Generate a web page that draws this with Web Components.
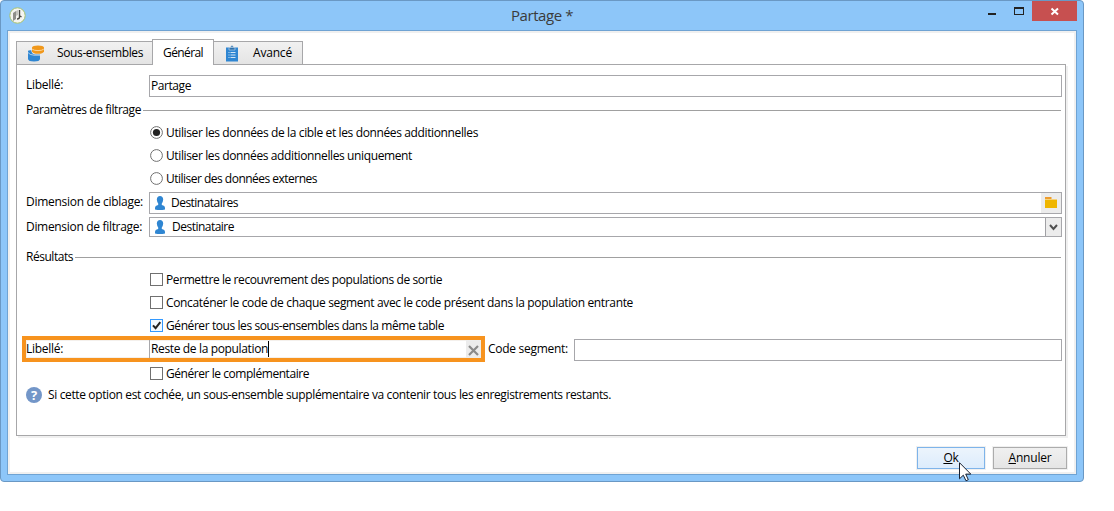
<!DOCTYPE html>
<html lang="fr">
<head>
<meta charset="utf-8">
<title>Partage</title>
<style>
html,body{margin:0;background:#fff}
body{font:12px/16px "Open Sans","Noto Sans",sans-serif;color:#000;overflow:hidden}
</style>
</head>
<body>
<app-window heading="Partage *">
  <tab-bar slot="tabs">
    <tab-item label="Sous-ensembles" w="86" style="width:137px"><ui-icon name="db"></ui-icon></tab-item>
    <tab-item label="Général" w="40" active style="width:62px"></tab-item>
    <tab-item label="Avancé" w="39" style="width:90px"><ui-icon name="clip"></ui-icon></tab-item>
  </tab-bar>
  <form-row style="height:22px;margin-top:10px" label="Libellé:" w="37"><text-field><fit-text w="40">Partage</fit-text></text-field></form-row>
  <group-title style="margin-top:5px" label="Paramètres de filtrage" w="115"></group-title>
  <option-item style="margin-top:3px" kind="radio" on label="Utiliser les données de la cible et les données additionnelles" w="312"></option-item>
  <option-item kind="radio" label="Utiliser les données additionnelles uniquement" w="246"></option-item>
  <option-item kind="radio" label="Utiliser des données externes" w="151"></option-item>
  <form-row style="height:22px;margin-top:2px" label="Dimension de ciblage:" w="117"><text-field><ui-icon name="user"></ui-icon><fit-text w="67">Destinataires</fit-text><ui-icon slot="end" name="folder"></ui-icon></text-field></form-row>
  <form-row style="height:20px;margin-top:3px" label="Dimension de filtrage:" w="116"><text-field><ui-icon name="user"></ui-icon><fit-text w="62" style="margin-left:1px">Destinataire</fit-text><ui-icon slot="end" name="drop"></ui-icon></text-field></form-row>
  <group-title style="margin-top:12px" label="Résultats" w="47"></group-title>
  <option-item style="margin-top:3px" label="Permettre le recouvrement des populations de sortie" w="276"></option-item>
  <option-item label="Concaténer le code de chaque segment avec le code présent dans la population entrante" w="467"></option-item>
  <option-item on label="Générer tous les sous-ensembles dans la même table" w="278"></option-item>
  <segment-row></segment-row>
  <option-item label="Générer le complémentaire" w="143"></option-item>
  <help-line style="margin-top:2px"></help-line>
  <push-button slot="actions" primary style="width:66px"><u>O</u>k</push-button>
  <push-button slot="actions" style="width:72px"><u>A</u>nnuler</push-button>
</app-window>
<mouse-cursor></mouse-cursor>
<script>
const define=(name,tpl,after)=>customElements.define(name,class extends HTMLElement{
  constructor(){super();this.attachShadow({mode:'open'});}
  connectedCallback(){
    this.shadowRoot.innerHTML=tpl(n=>this.getAttribute(n)||'');
    if(after)after(this);
  }
});

// Text that spreads its letters so that it fills a given width.
define('fit-text',()=>`<style>:host{display:inline-block;white-space:pre;flex:none}span{display:inline-block}</style><span><slot></slot></span>`,el=>{
  const s=el.shadowRoot.querySelector('span'),n=el.textContent.length,w=+el.getAttribute('w');
  if(w&&n)s.style.letterSpacing=((w-s.getBoundingClientRect().width)/n).toFixed(4)+'px';
});

const icons={
db:[17,17,`<path d="M0 5.800V14Q.3 16.500 6 16.500Q11.700 16.500 12 14V9.500H7Q3.500 9 3.300 5.300Q1 5 0 5.800Z" fill="#2f86d2"/><path d="M0 7.500Q1.500 10 6 10.200H12" fill="none" stroke="#cfe3f5" stroke-width=".8"/><path d="M4 2.500V6.200Q5 8.800 10 8.800T16 6.200V2.500Z" fill="#f0981c"/><ellipse cx="10" cy="2.600" rx="6" ry="2.200" fill="#f0981c"/><path d="M4.200 4.200Q6 5.600 10 5.600T15.800 4.200" fill="none" stroke="#fbe3bf" stroke-width=".8"/>`],
clip:[12,17,`<path d="M0 2.500H12V16.500H0Z" fill="#2f86d2"/><path d="M3 5V2.700H4.500Q4.500.6 6 .6T7.500 2.700H9V5Z" fill="#2a6fab" stroke="#e9eef4" stroke-width=".5"/><path d="M5.500 2h1v1h-1z" fill="#fff"/><path d="M2.500 7.500h1M4.500 7.500h5M2.500 10h1M4.500 10h5M2.500 12.500h1M4.500 12.500h5" stroke="#d3e6f6"/>`],
user:[10,14,`<path d="M1.800 3.600Q2 0 5 0T8.200 3.600Q8 6 6.800 7.500V9Q10 9.700 10 12V13.500Q5 14.500 0 13.500V12Q0 9.700 3.200 9V7.500Q2 6 1.800 3.600Z" fill="#2f86d2"/>`],
folder:[20,20,`<path d="M0 0H20V20H0Z" fill="#ececec"/><path d="M4 4H10.500V6H4Z" fill="#ee9c2c"/><path d="M4 6H16V7H4Z" fill="#f6d27a"/><path d="M4 7H16V15H4Z" fill="#efb600"/>`],
drop:[16,18,`<path d="M0 0H16V18H0Z" fill="#ececec"/><path d="M.5 0V18" stroke="#a0a0a4"/><path d="M5 7L8.500 11L12 7" fill="none" stroke="#505050" stroke-width="2"/>`]};
define('ui-icon',a=>{const [w,h,p]=icons[a('name')];return `<style>:host{display:block;flex:none;width:${w}px;height:${h}px}svg{display:block}</style><svg width="${w}" height="${h}" viewBox="0 0 ${w} ${h}">${p}</svg>`});

define('app-window',a=>`<style>
:host{display:flex;flex-direction:column;box-sizing:border-box;width:1084px;height:482px;border:1px solid #6a98c4;border-radius:4px;background:#8dc6f9;padding:0 6px 6px}
header{height:29px;display:flex;flex:none}
.logo{margin:6px 0 0 2px;width:17px;height:17px}
.title{flex:1;padding-left:485px;font:15px/29px "Open Sans","Noto Sans",sans-serif;color:#3b3b3b}
.min{width:8px;height:2px;background:#222;margin:12px 18px 0 0}
.max{box-sizing:border-box;width:10px;height:8px;border:1px solid #222;border-top-width:2px;margin:6px 8px 0 0}
.close{width:45px;height:20px;background:#c75050}
main{flex:1;box-sizing:border-box;border:1px solid #6fa3d3;background:#fff;box-shadow:inset 0 0 0 2px #f0f0f0;padding:8px 9px 5px 8px;display:flex;flex-direction:column}
.panel{box-sizing:border-box;width:1050px;height:372px;border:1px solid #a7a7a9;box-shadow:2px 2px 0 #f0f0f0;padding:0 3px 0 9px;display:flex;flex-direction:column}
footer{display:flex;justify-content:flex-end;gap:8px;margin:11px 0 0}
svg{display:block}
</style><header><svg class="logo" viewBox="0 0 17 17"><circle cx="8.500" cy="8.500" r="7.700" fill="#f5f5f1" stroke="#a8c26c"/><path d="M4 6L7 4V12L4 14Z" fill="#8e8e8a"/><path d="M7 4L9 3V8L7 9Z" fill="#c5c5c0"/><path d="M10.500 3V10Q10.500 12 8 12M11 9L12.500 10" fill="none" stroke="#4a4a44" stroke-width="1.400"/></svg><div class="title"><fit-text w="62">${a('heading')}</fit-text></div><i class="min"></i><i class="max"></i><svg class="close" viewBox="0 0 45 20"><path d="M19.500 7.500L26 13.500M26 7.500L19.500 13.500" stroke="#fff" stroke-width="2"/></svg></header>
<main><slot name="tabs"></slot><div class="panel"><slot></slot></div><footer><slot name="actions"></slot></footer></main>`);

define('tab-bar',()=>`<style>:host{display:flex;align-items:flex-end;height:26px;margin-bottom:-1px;position:relative;flex:none}</style><slot></slot>`);
define('tab-item',a=>{const on=a('w')==='40';return `<style>:host{box-sizing:border-box;display:flex;align-items:center;justify-content:flex-end;height:24px;border:1px solid #a7a7a9;${on?'border-bottom:0;height:26px;background:#fff;margin:0 -1px 0 -1px;position:relative;z-index:1;padding:0 10px 0 0':'background:linear-gradient(#f1f1f1,#e4e4e4);padding:0 10px 0 0'}}
:host(:first-child){padding-right:9px}fit-text{padding-bottom:${on?0:1}px}::slotted(ui-icon){margin-right:auto!important;margin-left:11px}::slotted(ui-icon[name=clip]){margin-left:12px}</style><slot></slot><fit-text w="${a('w')}">${a('label')}</fit-text>`});

define('form-row',a=>`<style>:host{display:flex;flex:none}.l{width:123px;flex:none;padding-top:2px}::slotted(*){flex:1}</style><div class="l"><fit-text w="${a('w')}">${a('label')}</fit-text></div><slot></slot>`);
define('text-field',()=>`<style>:host{box-sizing:border-box;display:flex;align-items:center;border:1px solid #a7a7ab;background:#fff;padding-left:1px}
.end{margin-left:auto;display:flex}::slotted(ui-icon[name=user]){margin:0 6px 0 4px}.t{display:flex;align-items:center;padding-bottom:1px}</style><div class="t"><slot></slot></div><div class="end"><slot name="end"></slot></div>`);
define('group-title',a=>`<style>:host{display:flex;flex:none;align-items:center;height:16px}i{flex:1;height:1px;background:#a0a0a0;margin:1px 1px 0 2px}</style><fit-text w="${a('w')}">${a('label')}</fit-text><i></i>`);
define('option-item',a=>`<style>:host{display:flex;flex:none;align-items:center;height:23px;padding-left:124px}svg{margin-right:3px;flex:none}</style>`,el=>{
  const on=el.hasAttribute('on'),r=el.getAttribute('kind')==='radio';
  el.shadowRoot.innerHTML+=`<svg width="13" height="13">${r?`<circle cx="6.500" cy="6.500" r="5.900" fill="#fff" stroke="#707070"/>${on?'<circle cx="6.500" cy="6.500" r="3.600" fill="#222"/>':''}`:`<rect x=".5" y=".5" width="12" height="12" fill="${on?'#f3f9ff':'#fff'}" stroke="${on?'#3399ff':'#707070'}"/>${on?'<path d="M3 6.300L5.600 9.200L10.300 3.200" fill="none" stroke="#222" stroke-width="2"/>':''}`}</svg><fit-text w="${el.getAttribute('w')}">${el.getAttribute('label')}</fit-text>`;
});
define('segment-row',()=>`<style>:host{display:flex;flex:none;height:26px;margin:-1px 0 0 -4px}
.hl{box-sizing:border-box;width:463px;border:4px solid #f7931e;display:flex;box-shadow:inset 0 0 0 1px #f4f0ec}
.l{width:123px;line-height:18px}.in{flex:1;border-left:1px solid #a7a7ab;padding-left:1px;display:flex;line-height:18px}
.caret{width:1px;height:16px;margin-top:1px;background:#000}.x{margin-left:auto;background:#ececec;width:15px;height:18px}
.code{padding:5px 6px 0 3px}text-field{flex:1;height:22px;margin-top:3px}</style>
<div class="hl"><div class="l"><fit-text w="37">Libellé:</fit-text></div><div class="in"><fit-text w="117">Reste de la population</fit-text><i class="caret"></i><svg class="x" viewBox="0 0 15 18"><path d="M3 6L12 15M12 6L3 15" stroke="#8a8a8a" stroke-width="2.200"/></svg></div></div><div class="code"><fit-text w="80">Code segment:</fit-text></div><text-field></text-field>`);
define('help-line',()=>`<style>:host{display:flex;align-items:center;flex:none;height:16px;gap:6px}i{width:16px;height:16px;border-radius:50%;background:#7396c8;color:#fff;font:bold 13px/16px "Open Sans",sans-serif;text-align:center}</style><i>?</i><fit-text w="563">Si cette option est cochée, un sous-ensemble supplémentaire va contenir tous les enregistrements restants.</fit-text>`);
define('push-button',()=>`<style>:host{display:block;height:20px;border:1px solid #acacac;background:linear-gradient(#f0f0f0,#e5e5e5);box-shadow:0 0 0 1px #f0f0f0;text-align:center;line-height:20px;letter-spacing:-.2px}:host([primary]){border-color:#7eb4ea;background:linear-gradient(#ecf4fc,#dcecfc)}</style><slot></slot>`);
define('mouse-cursor',()=>`<style>:host{position:absolute;left:959px;top:462px}svg{display:block}</style><svg width="13" height="20"><path d="M.5.7V16.800L4.300 13.200L7 18.800L9.300 17.700L6.700 12.100H11.800Z" fill="#fff" stroke="#182030"/></svg>`);
</script>
</body>
</html>
